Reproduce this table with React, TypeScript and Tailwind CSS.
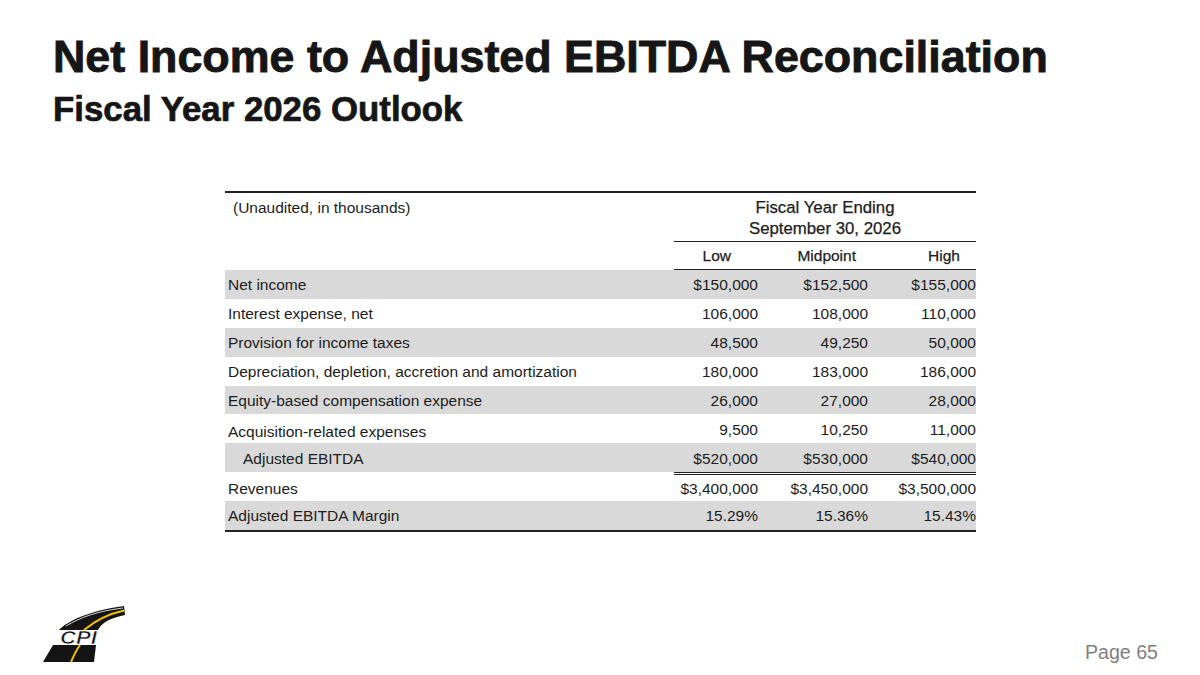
import React from "react";

type Row = {
  label: string;
  values: [string, string, string];
  gray: boolean;
  indent?: boolean;
  doubleTop?: boolean;
  last?: boolean;
  labelLow?: boolean;
};

const rows: Row[] = [
  { label: "Net income", values: ["$150,000", "$152,500", "$155,000"], gray: true },
  { label: "Interest expense, net", values: ["106,000", "108,000", "110,000"], gray: false },
  { label: "Provision for income taxes", values: ["48,500", "49,250", "50,000"], gray: true },
  {
    label: "Depreciation, depletion, accretion and amortization",
    values: ["180,000", "183,000", "186,000"],
    gray: false,
  },
  { label: "Equity-based compensation expense", values: ["26,000", "27,000", "28,000"], gray: true },
  { label: "Acquisition-related expenses", values: ["9,500", "10,250", "11,000"], gray: false, labelLow: true },
  { label: "Adjusted EBITDA", values: ["$520,000", "$530,000", "$540,000"], gray: true, indent: true },
  {
    label: "Revenues",
    values: ["$3,400,000", "$3,450,000", "$3,500,000"],
    gray: false,
    doubleTop: true,
  },
  { label: "Adjusted EBITDA Margin", values: ["15.29%", "15.36%", "15.43%"], gray: true, last: true },
];

function Logo() {
  return (
    <svg width="90" height="62" viewBox="0 0 90 62">
      {/* lower road section */}
      <path d="M5 59 L56 59 L58 42 L15 42 Z" fill="#141414" />
      {/* upper road sweep */}
      <path d="M21 27 C30 18 50 8 86 3 L87 12 C72 15 63 20 60 27 Z" fill="#141414" />
      {/* yellow center line */}
      <path d="M33 59 C36 52 39 46 42 42" stroke="#f2c200" strokeWidth="2" fill="none" />
      <path d="M46 27 C58 17 70 11 86 7.5" stroke="#f2c200" strokeWidth="2" fill="none" />
      {/* white side stripe */}
      <path d="M28 23 C43 14 60 8 85 5" stroke="#ffffff" strokeWidth="0.8" fill="none" />
      <text
        x="22"
        y="41"
        textLength="37"
        lengthAdjust="spacingAndGlyphs"
        fontFamily="'Liberation Sans', Arial, sans-serif"
        fontWeight="900"
        fontStyle="italic"
        fontSize="18.5"
        fill="#141414"
        stroke="#ffffff"
        strokeWidth="0.6"
      >
        CPI
      </text>
    </svg>
  );
}

export default function App() {
  return (
    <div
      className="w-[1200px] h-[675px] bg-white overflow-hidden flex flex-col text-[#1c1c1c]"
      style={{ fontFamily: "'Liberation Sans', Arial, sans-serif" }}
    >
      {/* Titles */}
      <div className="pl-[53px] pt-[34px]">
        <h1 className="text-[44.8px] leading-none font-bold text-[#161616] [-webkit-text-stroke:0.9px_#161616]">
          Net Income to Adjusted EBITDA Reconciliation
        </h1>
        <h2 className="mt-[13px] text-[34.8px] leading-none font-bold text-[#161616] [-webkit-text-stroke:0.7px_#161616]">
          Fiscal Year 2026 Outlook
        </h2>
      </div>

      {/* Table */}
      <div className="ml-[225px] mt-[64px] w-[751px] text-[15.5px] border-t-2 border-[#222]">
        {/* header block */}
        <div className="flex">
          <div className="flex-1 pl-[8px] pt-[4px] leading-[21px]">(Unaudited, in thousands)</div>
          <div className="w-[302px] pt-[4px] pb-[2.3px] border-b-[1.5px] border-[#222] text-center text-[16.8px] leading-[21px] [-webkit-text-stroke:0.25px_#1c1c1c]">
            <div>Fiscal Year Ending</div>
            <div>September 30, 2026</div>
          </div>
        </div>
        <div className="flex">
          <div className="flex-1" />
          <div className="w-[302px] h-[28.3px] flex items-center border-b-[1.5px] border-[#222] text-[15.5px] [-webkit-text-stroke:0.25px_#1c1c1c]">
            <div className="w-[84px] text-right pr-[27px]">Low</div>
            <div className="w-[110px] text-right pr-[12px]">Midpoint</div>
            <div className="w-[108px] text-right pr-[16px]">High</div>
          </div>
        </div>

        {/* body rows */}
        {rows.map((r) => (
          <div
            key={r.label}
            className={
              "h-[28.85px] flex flex-col " +
              (r.gray ? "bg-[#d9d9d9] " : "bg-white ") +
              (r.last ? "border-b-2 border-[#222] box-content" : "")
            }
          >
            {r.doubleTop && (
              <div className="ml-auto w-[302px] h-[3px] border-y border-[#222]" />
            )}
            <div className="flex-1 flex items-center pt-[1px]">
              <div
                className={
                  "flex-1 " +
                  (r.indent ? "pl-[18px] " : "pl-[3px] ") +
                  (r.labelLow ? "pt-[4px]" : "")
                }
              >
                {r.label}
              </div>
              <div className="w-[110px] text-right">{r.values[0]}</div>
              <div className="w-[110px] text-right">{r.values[1]}</div>
              <div className="w-[108px] text-right">{r.values[2]}</div>
            </div>
          </div>
        ))}
      </div>

      {/* Footer */}
      <div className="mt-auto flex items-end justify-between pl-[38px] pr-[42px] pb-[10px]">
        <Logo />
        <div className="text-[19.6px] leading-none text-[#7f7f7f] pb-[2px]">Page 65</div>
      </div>
    </div>
  );
}
